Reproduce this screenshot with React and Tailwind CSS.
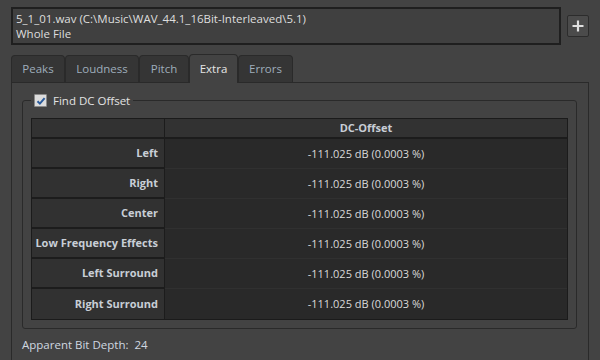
import React from 'react';

const rows = ['Left', 'Right', 'Center', 'Low Frequency Effects', 'Left Surround', 'Right Surround'];
const tabs = ['Peaks', 'Loudness', 'Pitch', 'Extra', 'Errors'];
const tabWidths = { Peaks: 'w-[54px]', Loudness: 'w-[74px]', Pitch: 'w-[50px]', Extra: 'w-[49px]', Errors: 'w-[55px]' };

const App = () => {
  return (
    <div
      className="w-[600px] h-[360px] overflow-hidden bg-[#434343] pl-[11px] pt-[7px] text-[11px] text-[#dedede]"
      style={{ fontFamily: '"Open Sans", "Noto Sans", sans-serif' }}
    >
      {/* File selector */}
      <div className="flex items-start">
        <div className="w-[550px] h-[38px] border-2 border-[#1f1f1f] bg-[#404040] px-[3px] pt-[2px] leading-[15px] text-[11.5px]">
          <div>5_1_01.wav (C:\Music\WAV_44.1_16Bit-Interleaved\5.1)</div>
          <div>Whole File</div>
        </div>
        <button className="ml-[6px] mt-[8px] w-[22px] h-[22px] rounded-[2px] border border-[#2c2c2c] bg-[#4b4b4b] flex items-center justify-center">
          <svg width="14" height="14" viewBox="0 0 14 14">
            <path d="M7 1.5v11M1.5 7h11" stroke="#e0e0e0" strokeWidth="2.2" />
          </svg>
        </button>
      </div>

      {/* Tabs */}
      <div className="flex items-end mt-[9px] h-[28px] text-[11.5px]">
        {tabs.map((t) => (
          <div
            key={t}
            className={`${tabWidths[t]} flex items-center justify-center pb-[1px] rounded-t-[4px] border border-[#2a2a2a] ${
              t === 'Extra'
                ? 'h-[29px] bg-[#434343] border-b-0 text-[#e6e6e6] -mb-px relative z-10'
                : 'h-[27px] bg-[#353535] border-b-0 text-[#9fadbb]'
            }`}
          >
            {t}
          </div>
        ))}
      </div>

      {/* Panel */}
      <div className="w-[578px] h-[300px] border border-[#2a2a2a] pl-[10px] pr-[11px] pt-[9px]">
        <fieldset className="border border-[#2a2a2a] rounded-[3px] px-[8px] pb-[8px] pt-[9px]">
          <legend className="px-[3px] flex items-center gap-[6px]">
            <span className="w-[13px] h-[13px] rounded-[1px] bg-[#dcdcdc] border border-[#8a8a8a] flex items-center justify-center">
              <svg width="10" height="10" viewBox="0 0 10 10">
                <path d="M1.5 5.2l2.4 2.4L8.6 2.2" stroke="#2a5b9c" strokeWidth="2" fill="none" />
              </svg>
            </span>
            <span className="text-[#e2e2e2] text-[11.5px]">Find DC Offset</span>
          </legend>

          <div className="border border-[#1b1b1b] grid grid-cols-[133px_1fr]">
            <div className="h-[20px] bg-[#323232] border-r border-b-2 border-[#1c1c1c]"></div>
            <div className="h-[20px] bg-[#323232] border-b-2 border-[#1c1c1c] flex items-center justify-center font-bold text-[#c8ced6]">
              DC-Offset
            </div>
            {rows.map((r, i) => (
              <React.Fragment key={r}>
                <div
                  className={`h-[30px] bg-[#313131] border-r border-[#1c1c1c] flex items-center justify-end pr-[6px] font-bold whitespace-nowrap text-[#c8ced6] ${
                    i < rows.length - 1 ? 'border-b-2' : ''
                  }`}
                >
                  {r}
                </div>
                <div
                  className={`h-[30px] bg-[#292929] flex items-center justify-center text-[#dadada] ${
                    i < rows.length - 1 ? 'border-b border-[#303030]' : ''
                  }`}
                >
                  -111.025 dB (0.0003 %)
                </div>
              </React.Fragment>
            ))}
          </div>
        </fieldset>
        <div className="mt-[7px] text-[#d0d8e0] text-[11.5px]">Apparent Bit Depth:&nbsp; 24</div>
      </div>
    </div>
  );
};

export default App;
